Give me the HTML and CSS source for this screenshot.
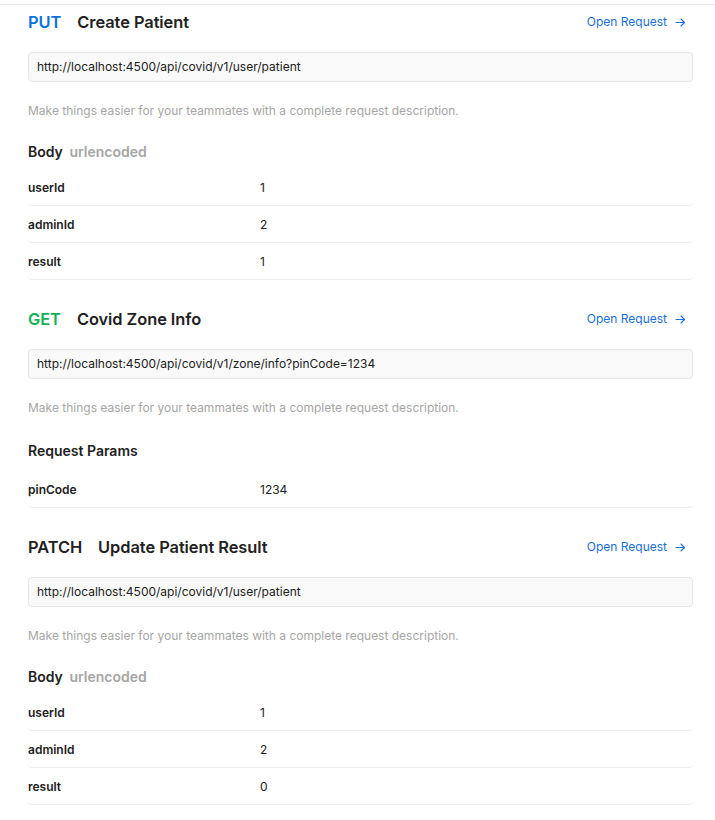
FILE: index.html
```html
<!DOCTYPE html>
<html lang="en">
<head>
<meta charset="utf-8">
<title>Covid API Documentation</title>
<link rel="stylesheet" href="styles.css">
</head>
<body>
<div class="topline"></div>
<main class="docs">
  <section class="request first">
    <header class="req-head">
      <h2 class="req-title"><span class="method put">PUT</span><span class="req-name">Create Patient</span></h2>
      <a class="open-link" href="#">Open Request <svg class="arrow" width="11" height="11" viewBox="0 0 11 11"><path d="M1 5.5h8.5M6 2l3.5 3.5L6 9" fill="none" stroke="currentColor" stroke-width="1.1" stroke-linecap="round" stroke-linejoin="round"/></svg></a>
    </header>
    <div class="url-box">http://localhost:4500/api/covid/v1/user/patient</div>
    <p class="desc">Make things easier for your teammates with a complete request description.</p>
    <h3 class="sub-head">Body <span class="muted">urlencoded</span></h3>
    <div class="table">
      <div class="row"><span class="key">userId</span><span class="val">1</span></div>
      <div class="row"><span class="key">adminId</span><span class="val">2</span></div>
      <div class="row"><span class="key">result</span><span class="val">1</span></div>
    </div>
  </section>

  <section class="request">
    <header class="req-head">
      <h2 class="req-title"><span class="method get">GET</span><span class="req-name">Covid Zone Info</span></h2>
      <a class="open-link" href="#">Open Request <svg class="arrow" width="11" height="11" viewBox="0 0 11 11"><path d="M1 5.5h8.5M6 2l3.5 3.5L6 9" fill="none" stroke="currentColor" stroke-width="1.1" stroke-linecap="round" stroke-linejoin="round"/></svg></a>
    </header>
    <div class="url-box">http://localhost:4500/api/covid/v1/zone/info?pinCode=1234</div>
    <p class="desc">Make things easier for your teammates with a complete request description.</p>
    <h3 class="sub-head params">Request Params</h3>
    <div class="table params-table">
      <div class="row"><span class="key">pinCode</span><span class="val">1234</span></div>
    </div>
  </section>

  <section class="request">
    <header class="req-head">
      <h2 class="req-title"><span class="method patch">PATCH</span><span class="req-name">Update Patient Result</span></h2>
      <a class="open-link" href="#">Open Request <svg class="arrow" width="11" height="11" viewBox="0 0 11 11"><path d="M1 5.5h8.5M6 2l3.5 3.5L6 9" fill="none" stroke="currentColor" stroke-width="1.1" stroke-linecap="round" stroke-linejoin="round"/></svg></a>
    </header>
    <div class="url-box">http://localhost:4500/api/covid/v1/user/patient</div>
    <p class="desc">Make things easier for your teammates with a complete request description.</p>
    <h3 class="sub-head">Body <span class="muted">urlencoded</span></h3>
    <div class="table">
      <div class="row"><span class="key">userId</span><span class="val">1</span></div>
      <div class="row"><span class="key">adminId</span><span class="val">2</span></div>
      <div class="row"><span class="key">result</span><span class="val">0</span></div>
    </div>
  </section>
</main>
</body>
</html>
```
FILE: styles.css
```css
* { box-sizing: border-box; }

html, body {
  margin: 0;
  padding: 0;
  background: #ffffff;
}

body {
  font-family: Inter, "Noto Sans", "Liberation Sans", sans-serif;
  color: #212121;
  font-size: 12px;
}

.topline {
  height: 5px;
  border-bottom: 1px solid #e6e6e6;
}

.docs {
  display: flex;
  flex-direction: column;
  padding: 0 22px 0 28px;
}

.request {
  display: flex;
  flex-direction: column;
  margin-top: 22px;
}

.request.first {
  margin-top: 0;
}

.req-head {
  display: flex;
  align-items: center;
  justify-content: space-between;
  height: 32px;
  padding-top: 2px;
}

.req-title {
  margin: 0;
  display: flex;
  gap: 16px;
  font-size: 16.4px;
  font-weight: 600;
  line-height: 20px;
  letter-spacing: -0.05px;
}

.method.put { color: #0b6fe0; }
.method.get { color: #14b154; }
.method.patch { color: #212121; }

.open-link {
  display: flex;
  align-items: center;
  gap: 8px;
  margin-right: 7px;
  color: #1a6fd8;
  text-decoration: none;
  font-size: 12px;
  line-height: 16px;
}

.arrow { display: block; }

.url-box {
  margin-top: 15px;
  height: 30px;
  display: flex;
  align-items: center;
  padding: 0 8px 1px;
  background: #f9f9f9;
  border: 1px solid #e6e6e6;
  border-radius: 4px;
  font-size: 12px;
  color: #212121;
}

.desc {
  margin: 20px 0 0;
  font-size: 12px;
  line-height: 18px;
  color: #a6a6a6;
}

.sub-head {
  margin: 22px 0 0;
  font-size: 14px;
  line-height: 20px;
  font-weight: 600;
  color: #212121;
}

.sub-head.params {
  margin-top: 24px;
}

.muted {
  color: #a6a6a6;
  margin-left: 3px;
}

.table {
  display: flex;
  flex-direction: column;
  margin-top: 7px;
}

.params-table {
  margin-top: 10px;
}

.row {
  display: grid;
  grid-template-columns: 232px 1fr;
  align-items: center;
  height: 37px;
  border-bottom: 1px solid #ededed;
  border-radius: 0 0 4px 4px;
}

.key {
  font-weight: 600;
  font-size: 12px;
}

.val {
  font-size: 12px;
}
```
